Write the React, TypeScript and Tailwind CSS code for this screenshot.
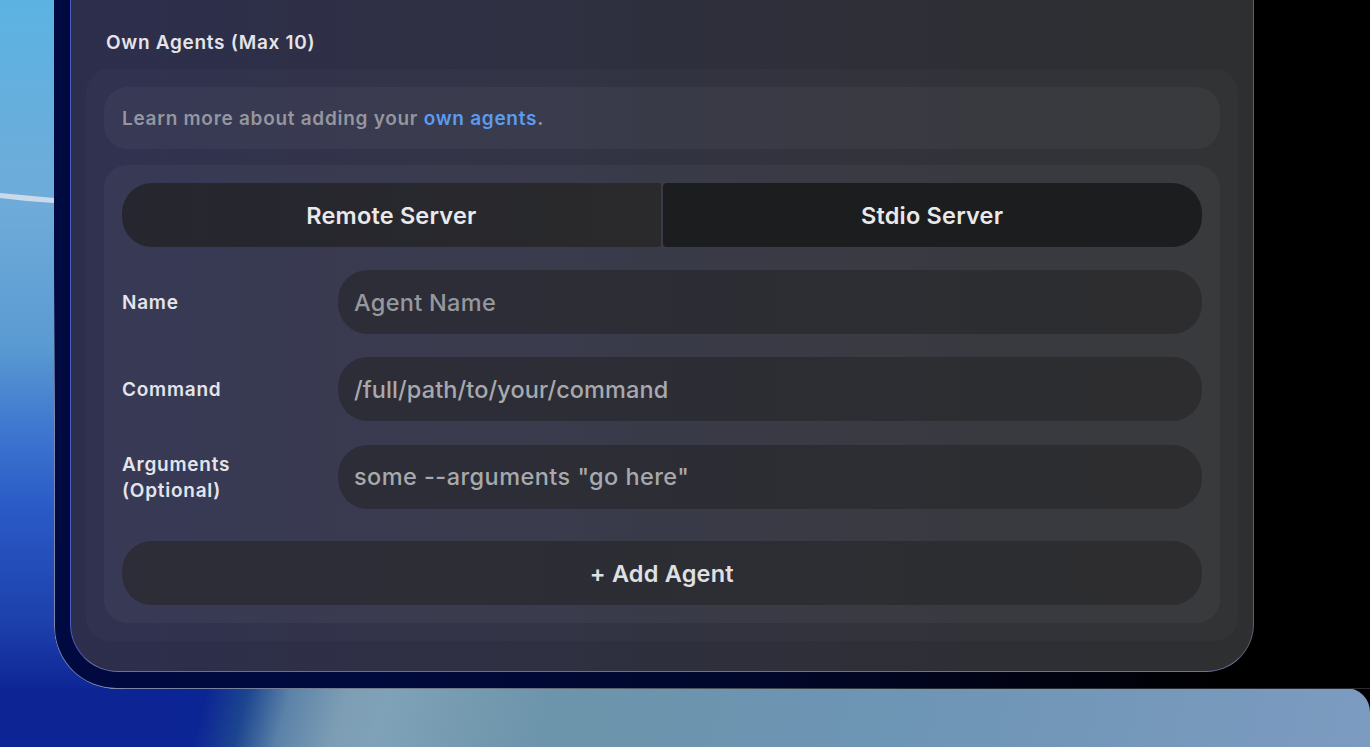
import React from 'react';

const font = { fontFamily: 'Inter, "Noto Sans", sans-serif' };

function FormRow({ label, placeholder, textClass }: { label: React.ReactNode; placeholder: string; textClass: string }) {
  return (
    <div className="flex items-center h-[64px]">
      <div className="w-[216px] pt-[2px] text-[19px] leading-[26px] font-semibold tracking-[0.75px] text-[#e4e4ea]">{label}</div>
      <div className="flex-1 h-[64px] rounded-[30px] flex items-center px-4 pt-px bg-[linear-gradient(90deg,#2c2d38,#2d2d2f)]">
        <span className={`text-[23.5px] font-medium ${textClass}`}>{placeholder}</span>
      </div>
    </div>
  );
}

export default function App() {
  return (
    <div style={font} className="w-[1370px] h-[747px] overflow-hidden bg-black flex flex-col">
      {/* wallpaper + window */}
      <div className="relative h-[688px] flex shrink-0 bg-[linear-gradient(180deg,#5cb3e2_0%,#6fabd9_30%,#5a9bd2_50%,#3f78d0_62%,#2a5ac6_74%,#1d41ad_90%,#0e2796_100%)]">
        <svg className="absolute left-0 top-[185px]" width="54" height="24" viewBox="0 0 54 24">
          <path d="M0 8 C18 10 36 11 54 13 L54 18 C36 17 18 15 0 13 Z" fill="#d4dfec" opacity="0.9" />
        </svg>
        <div className="ml-[54px] flex-1 h-full rounded-bl-[62px] bg-[linear-gradient(90deg,#000a42_0%,#000a3c_25%,#01072a_55%,#010312_75%,#000_90%)]">
          <div className="ml-4 w-[1183.5px] h-[672px] rounded-b-[48px] border border-t-0 border-[#5a5f74] border-l-[#4f5ac0] border-b-[#6a70a0] pt-[69px] px-[15px] bg-[linear-gradient(90deg,#2c2e4d_0%,#2f3044_30%,#2e2f38_65%,#2e2f31_100%)] relative">
            <div className="absolute left-[35px] top-[31px] text-[19px] leading-6 font-semibold tracking-[0.7px] text-[#e4e4e9]">
              Own Agents (Max 10)
            </div>
            {/* section */}
            <div className="h-[572px] rounded-[24px] bg-white/[0.025] p-[18px] flex flex-col gap-4">
              <div className="h-[62px] shrink-0 rounded-[24px] bg-white/[0.035] flex items-center px-[18px] pt-[2px] text-[19px] font-semibold tracking-[0.72px] text-[#95969e]">
                <span>
                  Learn more about adding your <span className="text-[#5b9cf0]">own agents</span>.
                </span>
              </div>
              <div className="h-[458px] rounded-[24px] bg-white/[0.035] p-[18px] flex flex-col">
                <div className="flex h-[64px] shrink-0 gap-[2px] text-[23.5px] font-semibold tracking-[0.2px] text-[#e9e9ec]">
                  <div className="flex-1 rounded-l-[30px] rounded-r-[2px] pt-px flex items-center justify-center bg-[linear-gradient(90deg,#25262f,#2a2a2c)]">
                    Remote Server
                  </div>
                  <div className="flex-1 rounded-r-[30px] rounded-l-[4px] pt-px flex items-center justify-center bg-[#1c1d1f]">
                    Stdio Server
                  </div>
                </div>
                <div className="mt-[23px] flex flex-col gap-[23.3px]">
                  <FormRow label="Name" placeholder="Agent Name" textClass="text-[#97989e] tracking-[0.3px]" />
                  <FormRow label="Command" placeholder="/full/path/to/your/command" textClass="text-[#a8a9ae] tracking-[0.1px]" />
                  <FormRow
                    label={
                      <>
                        Arguments
                        <br />
                        (Optional)
                      </>
                    }
                    placeholder={'some --arguments "go here"'}
                    textClass="text-[#a8a9ae] tracking-[0.45px]"
                  />
                </div>
                <div className="mt-[32.4px] h-[64px] shrink-0 rounded-[30px] pt-px flex items-center justify-center text-[23.5px] font-semibold tracking-[0.2px] text-[#e0e0e4] bg-[linear-gradient(90deg,#2c2d38,#2d2d2f)]">
                  + Add Agent
                </div>
              </div>
            </div>
          </div>
        </div>
        {/* light edge of the window, only around the lower left corner */}
        <div className="absolute left-[54px] -bottom-px w-[70px] h-[420px] rounded-bl-[62px] border-l border-b border-[#8088ac] [mask-image:linear-gradient(to_top,#000_65%,transparent)]" />
      </div>
      {/* wallpaper strip below the window */}
      <div className="flex-1 rounded-tr-[24px] bg-[linear-gradient(105deg,#0d2494_0%,#0c2594_15%,#1c4690_18%,#5b82a8_21%,#7d9db4_25%,#7fa2b8_28%,#6c94aa_40%,#6d95b5_65%,#7c9bc0_100%)]">
        <div className="h-px ml-[110px] bg-[linear-gradient(90deg,#7c84a6,#6d7686_30%,#2a2b2e_65%)]" />
      </div>
    </div>
  );
}
